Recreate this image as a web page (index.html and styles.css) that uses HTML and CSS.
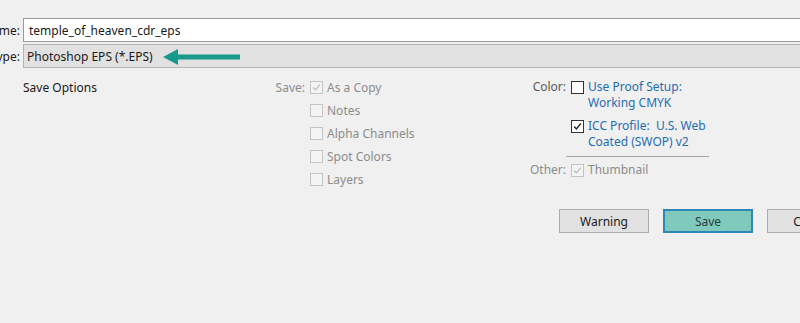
FILE: index.html
```html
<!DOCTYPE html>
<html lang="en">
<head>
    <meta charset="UTF-8">
    <meta name="viewport" content="width=device-width, initial-scale=1.0">
    <title>Save As - Photoshop EPS</title>
    <link rel="stylesheet" href="styles.css">
</head>
<body>
    <!-- File name and type -->
    <section class="file-rows">
        <div class="file-row">
            <span class="file-label">File name:</span>
            <div class="file-field name-field">temple_of_heaven_cdr_eps</div>
        </div>
        <div class="file-row">
            <span class="file-label">Save as type:</span>
            <div class="file-field type-field">
                Photoshop EPS (*.EPS)
                <svg class="arrow" width="80" height="16" viewBox="0 0 80 16">
                    <path d="M0 8 L15 0 L15 5.5 L77 5.5 L77 10.5 L15 10.5 L15 16 Z" fill="#179a8b"/>
                </svg>
            </div>
        </div>
    </section>

    <!-- Save options -->
    <section class="options">
        <div class="options-title">Save Options</div>

        <div class="save-group">
            <div class="opt-row disabled">
                <span class="opt-label">Save:</span>
                <span class="check checked"><svg viewBox="0 0 13 13"><path d="M2.5 6.5 L5.2 9.3 L10.5 3"/></svg></span>
                <span class="opt-text">As a Copy</span>
            </div>
            <div class="opt-row disabled">
                <span class="opt-label"></span>
                <span class="check"></span>
                <span class="opt-text">Notes</span>
            </div>
            <div class="opt-row disabled">
                <span class="opt-label"></span>
                <span class="check"></span>
                <span class="opt-text">Alpha Channels</span>
            </div>
            <div class="opt-row disabled">
                <span class="opt-label"></span>
                <span class="check"></span>
                <span class="opt-text">Spot Colors</span>
            </div>
            <div class="opt-row disabled">
                <span class="opt-label"></span>
                <span class="check"></span>
                <span class="opt-text">Layers</span>
            </div>
        </div>

        <div class="color-group">
            <div class="multi-row">
                <span class="opt-label muted">Color:</span>
                <span class="check dark"></span>
                <span class="opt-text link">Use Proof Setup:<br>Working CMYK</span>
            </div>
            <div class="multi-row icc-row">
                <span class="opt-label"></span>
                <span class="check dark checked"><svg viewBox="0 0 13 13"><path d="M2.5 6.5 L5.2 9.3 L10.5 3"/></svg></span>
                <span class="opt-text link">ICC Profile:&nbsp; U.S. Web<br>Coated (SWOP) v2</span>
            </div>
            <div class="separator"></div>
            <div class="multi-row disabled">
                <span class="opt-label">Other:</span>
                <span class="check checked"><svg viewBox="0 0 13 13"><path d="M2.5 6.5 L5.2 9.3 L10.5 3"/></svg></span>
                <span class="opt-text">Thumbnail</span>
            </div>
        </div>
    </section>

    <!-- Dialog buttons -->
    <section class="buttons">
        <button type="button" class="btn">Warning</button>
        <button type="button" class="btn btn-save">Save</button>
        <button type="button" class="btn">Cancel</button>
    </section>
</body>
</html>
```

FILE: styles.css
```css
/* Save As dialog */
body {
    font-family: "Noto Sans", "Open Sans", sans-serif;
    font-size: 12px;
    background-color: #f0f0f0;
    color: #1a1a1a;
    margin: 0;
    padding: 0;
    overflow: hidden;
}

.file-rows {
    padding-top: 18px;
    display: flex;
    flex-direction: column;
    gap: 2px;
}

.file-row {
    display: flex;
    align-items: center;
    height: 24px;
}

.file-label {
    width: 20px;
    margin-right: 3px;
    display: flex;
    justify-content: flex-end;
    overflow: hidden;
    white-space: nowrap;
}

.file-field {
    position: relative;
    flex: 1;
    margin-right: -20px;
    height: 24px;
    box-sizing: border-box;
    display: flex;
    align-items: center;
    white-space: nowrap;
}

.name-field {
    background-color: white;
    border: 1px solid #9a9a9a;
    padding-left: 5px;
}

.type-field {
    background-color: #e1e1e1;
    border: 1px solid #b4b4b4;
    padding-left: 3px;
}

.arrow {
    position: absolute;
    left: 139px;
    top: 4px;
}

.options {
    display: flex;
    margin-top: 8px;
    padding-left: 23px;
}

.options-title {
    width: 237px;
    height: 23px;
    line-height: 23px;
}

.save-group {
    width: 260px;
}

.opt-row {
    display: flex;
    align-items: center;
    height: 23px;
}

.opt-label {
    width: 45px;
    text-align: right;
    flex-shrink: 0;
}

.check {
    width: 13px;
    height: 13px;
    box-sizing: border-box;
    border: 1px solid #c4c4c4;
    background-color: #f4f4f4;
    margin-left: 5px;
    flex-shrink: 0;
    display: flex;
}

.check svg {
    width: 11px;
    height: 11px;
    fill: none;
    stroke: #b8b8b8;
    stroke-width: 1.3;
}

.check.dark {
    border-color: #333;
    background-color: white;
}

.check.dark svg {
    stroke: #222;
    stroke-width: 1.6;
}

.opt-text {
    margin-left: 4px;
    white-space: nowrap;
}

.disabled {
    color: #8c8c8c;
}

.muted {
    color: #5a5a5a;
}

.link {
    color: #1f6cb5;
}

.color-group {
    width: 200px;
    padding-top: 3px;
    margin-left: 1px;
}

.multi-row {
    display: flex;
    align-items: flex-start;
    line-height: 16px;
}

.multi-row .check {
    margin-top: 2px;
}

.icc-row {
    margin-top: 7px;
}

.separator {
    height: 1px;
    width: 143px;
    margin: 6px 0 5px 45px;
    background-color: #a6a6a6;
}

.buttons {
    display: flex;
    gap: 14px;
    margin-top: 18px;
    padding-left: 559px;
}

.btn {
    width: 90px;
    height: 24px;
    flex-shrink: 0;
    font-family: inherit;
    font-size: 12px;
    color: #1a1a1a;
    background-color: #e1e1e1;
    border: 1px solid #adadad;
    padding: 0;
}

.btn-save {
    background-color: #80c9bd;
    border: 2px solid #2f86b8;
    color: #1f3f3a;
}
```
